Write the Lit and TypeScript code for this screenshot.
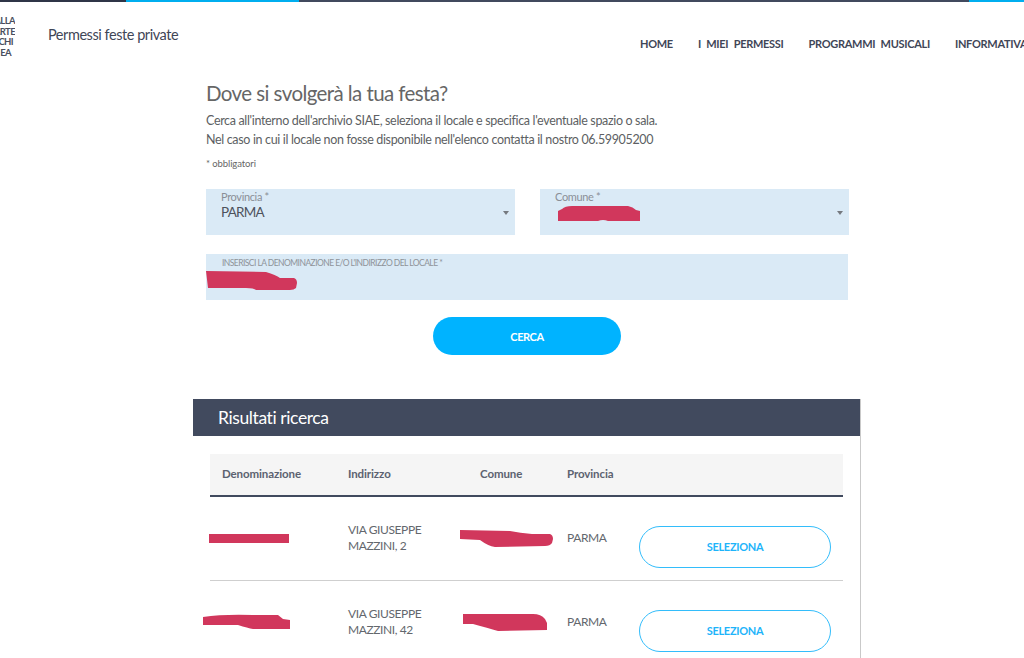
import { LitElement, html, css, svg } from "lit";
import { customElement } from "lit/decorators.js";

const SMEARS: Record<string, { w: number; h: number; d: string }> = {
  comune: { w: 82, h: 15, d: "M0 5 L4 3 Q7 0 14 0 L70 0 Q75 1 78 4 L82 5 L82 15 L50 15 Q45 13 40 15 L0 15 Z" },
  locale: { w: 91, h: 19, d: "M0 0 L60 1 Q70 4 74 7 L88 7 Q91 8 91 12 L90 17 Q88 19 84 19 L50 19 Q48 17 40 17 L2 17 Z" },
  den1: { w: 80, h: 10, d: "M0 1 L80 1 L80 10 L0 10 Z" },
  com1: { w: 93, h: 17, d: "M0 0 L50 1 Q60 3 72 4 L90 4 Q93 5 93 9 L92 13 Q90 16 85 16 L35 17 Q28 16 20 10 L0 9 Z" },
  den2: { w: 87, h: 15, d: "M0 3 Q20 0 50 1 L75 1 L80 5 L87 6 L87 15 L50 15 Q45 14 35 11 L0 11 Z" },
  com2: { w: 84, h: 17, d: "M0 0 L70 0 Q78 0 82 5 L84 9 L84 16 L35 17 Q25 14 10 10 L0 10 Z" },
};

function smear(key: string, cls: string) {
  const s = SMEARS[key];
  return html`<svg class="smear ${cls}" width=${s.w} height=${s.h} viewBox="0 0 ${s.w} ${s.h}">${svg`<path d=${s.d} fill="#d1375c"></path>`}</svg>`;
}

@customElement("app-root")
export class AppRoot extends LitElement {
  static styles = css`
    :host {
      display: block;
      height: 658px;
      overflow: hidden;
      background: #fff;
      font-family: "Lato", "Roboto", sans-serif;
      color: #5f6368;
    }
    .topbar { display: flex; height: 2px; background: #414a5e; }
    .topbar .a { width: 126px; background: #2f3547; }
    .topbar .b { width: 173px; background: #00aeef; }
    .topbar .c { flex: 1; }
    .topbar .d { width: 55px; background: #00aeef; }

    header { display: flex; height: 68px; }
    .logo {
      width: 15px; flex: none; overflow: hidden; padding-top: 14px;
      font-size: 9.5px; line-height: 10.7px; font-weight: 700; color: #4a5060; white-space: nowrap; letter-spacing: -0.6px;
    }
    .logo div { display: flex; justify-content: flex-end; }
    .logo .l3 { padding-right: 2px; }
    .logo .l4 { padding-right: 4px; }
    .site { margin: 23px 0 0 33px; font-size: 14.5px; line-height: 20px; letter-spacing: -0.45px; color: #3f4657; white-space: nowrap; }
    nav {
      display: flex; gap: 25px; margin: 34px 0 0 auto; width: 384px; flex: none; overflow: hidden;
      font-size: 11px; line-height: 16px; font-weight: 700; letter-spacing: -0.3px; word-spacing: 3px; color: #3f4657; white-space: nowrap;
    }

    .form { margin-left: 206px; width: 642px; padding-top: 9px; }
    h1 { margin: 0; font-size: 20.5px; line-height: 28px; font-weight: 400; letter-spacing: -0.58px; color: #666; }
    .lead { margin: 4px 0 0; font-size: 12.5px; line-height: 19px; letter-spacing: -0.34px; color: #5d5f63; white-space: nowrap; }
    .req { margin: 8px 0 0; font-size: 9.5px; line-height: 14px; letter-spacing: -0.1px; color: #666; }

    .selects { display: grid; grid-template-columns: 309px 309px; column-gap: 25px; margin-top: 18px; }
    .field { position: relative; height: 46px; background: #daeaf6; box-sizing: border-box; padding: 1px 15px 0; }
    .field label { display: block; font-size: 11px; line-height: 13px; letter-spacing: -0.35px; color: #8a8f96; }
    .field .val { font-size: 13.5px; line-height: 19px; letter-spacing: -0.75px; color: #4d525c; }
    .caret { position: absolute; right: 6px; top: 22px; width: 0; height: 0; border: 3.5px solid transparent; border-top: 4px solid #75797f; border-bottom: 0; }
    .wide { margin-top: 19px; padding-top: 3px; }
    .wide label { font-size: 8.5px; line-height: 12px; letter-spacing: -0.55px; color: #8e9399; padding-left: 1px; }
    .smear { position: absolute; }
    .s-comune { left: 18px; top: 17px; }
    .s-locale { left: 0; top: 17px; }

    .actions { display: flex; justify-content: center; margin-top: 17px; }
    .cerca {
      width: 188px; height: 38px; border: 0; border-radius: 19px; background: #00b3ff; color: #fff;
      font: 700 11px "Lato", "Roboto", sans-serif; letter-spacing: -0.4px;
    }

    .results { margin: 44px 0 0 193px; width: 668px; box-sizing: border-box; border-right: 1px solid #c9c9c9; height: 300px; }
    h2 { margin: 0; height: 37px; background: #414a5e; color: #fff; font-size: 17.5px; line-height: 37px; font-weight: 400; letter-spacing: -0.4px; padding-left: 25px; }
    .table { margin: 18px 0 0 17px; width: 633px; }
    .row { display: grid; grid-template-columns: 126px 132px 87px 72px 1fr; }
    .head { height: 38px; padding-bottom: 3px; background: #f5f5f5; border-bottom: 2px solid #414a5e; font-size: 11.5px; font-weight: 700; letter-spacing: -0.1px; color: #5c6270; align-items: center; box-sizing: content-box; }
    .cell { position: relative; padding-left: 12px; }
    .body { height: 84px; border-bottom: 1px solid #cfcfcf; font-size: 12px; line-height: 16px; letter-spacing: -0.4px; color: #63676d; align-items: start; padding-top: 19px; box-sizing: border-box; }
    .body:last-child { border-bottom: 0; }
    .addr { padding-top: 6px; }
    .prov { padding-top: 14px; }
    .sel {
      width: 192px; height: 42px; box-sizing: border-box; border: 1px solid #33bdfb; border-radius: 21px; background: #fff;
      color: #1eb4fa; font: 700 11px "Lato", "Roboto", sans-serif; letter-spacing: -0.3px; padding: 0 0 2px; margin-top: 10px; display: block;
    }
    .s-den1 { left: -1px; top: 17px; }
    .s-com1 { left: -8px; top: 14px; }
    .s-den2 { left: -7px; top: 14px; }
    .s-com2 { left: -5px; top: 14px; }
  `;

  render() {
    return html`
      <div class="topbar"><div class="a"></div><div class="b"></div><div class="c"></div><div class="d"></div></div>
      <header>
        <div class="logo"><div>ALLA</div><div>ARTE</div><div class="l3">CHI</div><div class="l4">EA</div></div>
        <div class="site">Permessi feste private</div>
        <nav><span>HOME</span><span>I MIEI PERMESSI</span><span>PROGRAMMI MUSICALI</span><span>INFORMATIVA</span></nav>
      </header>
      <section class="form">
        <h1>Dove si svolgerà la tua festa?</h1>
        <p class="lead">Cerca all'interno dell'archivio SIAE, seleziona il locale e specifica l'eventuale spazio o sala.<br />Nel caso in cui il locale non fosse disponibile nell'elenco contatta il nostro 06.59905200</p>
        <p class="req">* obbligatori</p>
        <div class="selects">
          <div class="field"><label>Provincia *</label><div class="val">PARMA</div><span class="caret"></span></div>
          <div class="field"><label>Comune *</label>${smear("comune", "s-comune")}<span class="caret"></span></div>
        </div>
        <div class="field wide"><label>INSERISCI LA DENOMINAZIONE E/O L'INDIRIZZO DEL LOCALE *</label>${smear("locale", "s-locale")}</div>
        <div class="actions"><button class="cerca">CERCA</button></div>
      </section>
      <section class="results">
        <h2>Risultati ricerca</h2>
        <div class="table">
          <div class="row head"><div class="cell">Denominazione</div><div class="cell">Indirizzo</div><div class="cell">Comune</div><div class="cell">Provincia</div><div></div></div>
          <div class="row body">
            <div class="cell">${smear("den1", "s-den1")}</div>
            <div class="cell addr">VIA GIUSEPPE<br />MAZZINI, 2</div>
            <div class="cell">${smear("com1", "s-com1")}</div>
            <div class="cell prov">PARMA</div>
            <div class="cell"><button class="sel">SELEZIONA</button></div>
          </div>
          <div class="row body">
            <div class="cell">${smear("den2", "s-den2")}</div>
            <div class="cell addr">VIA GIUSEPPE<br />MAZZINI, 42</div>
            <div class="cell">${smear("com2", "s-com2")}</div>
            <div class="cell prov">PARMA</div>
            <div class="cell"><button class="sel">SELEZIONA</button></div>
          </div>
        </div>
      </section>
    `;
  }
}
